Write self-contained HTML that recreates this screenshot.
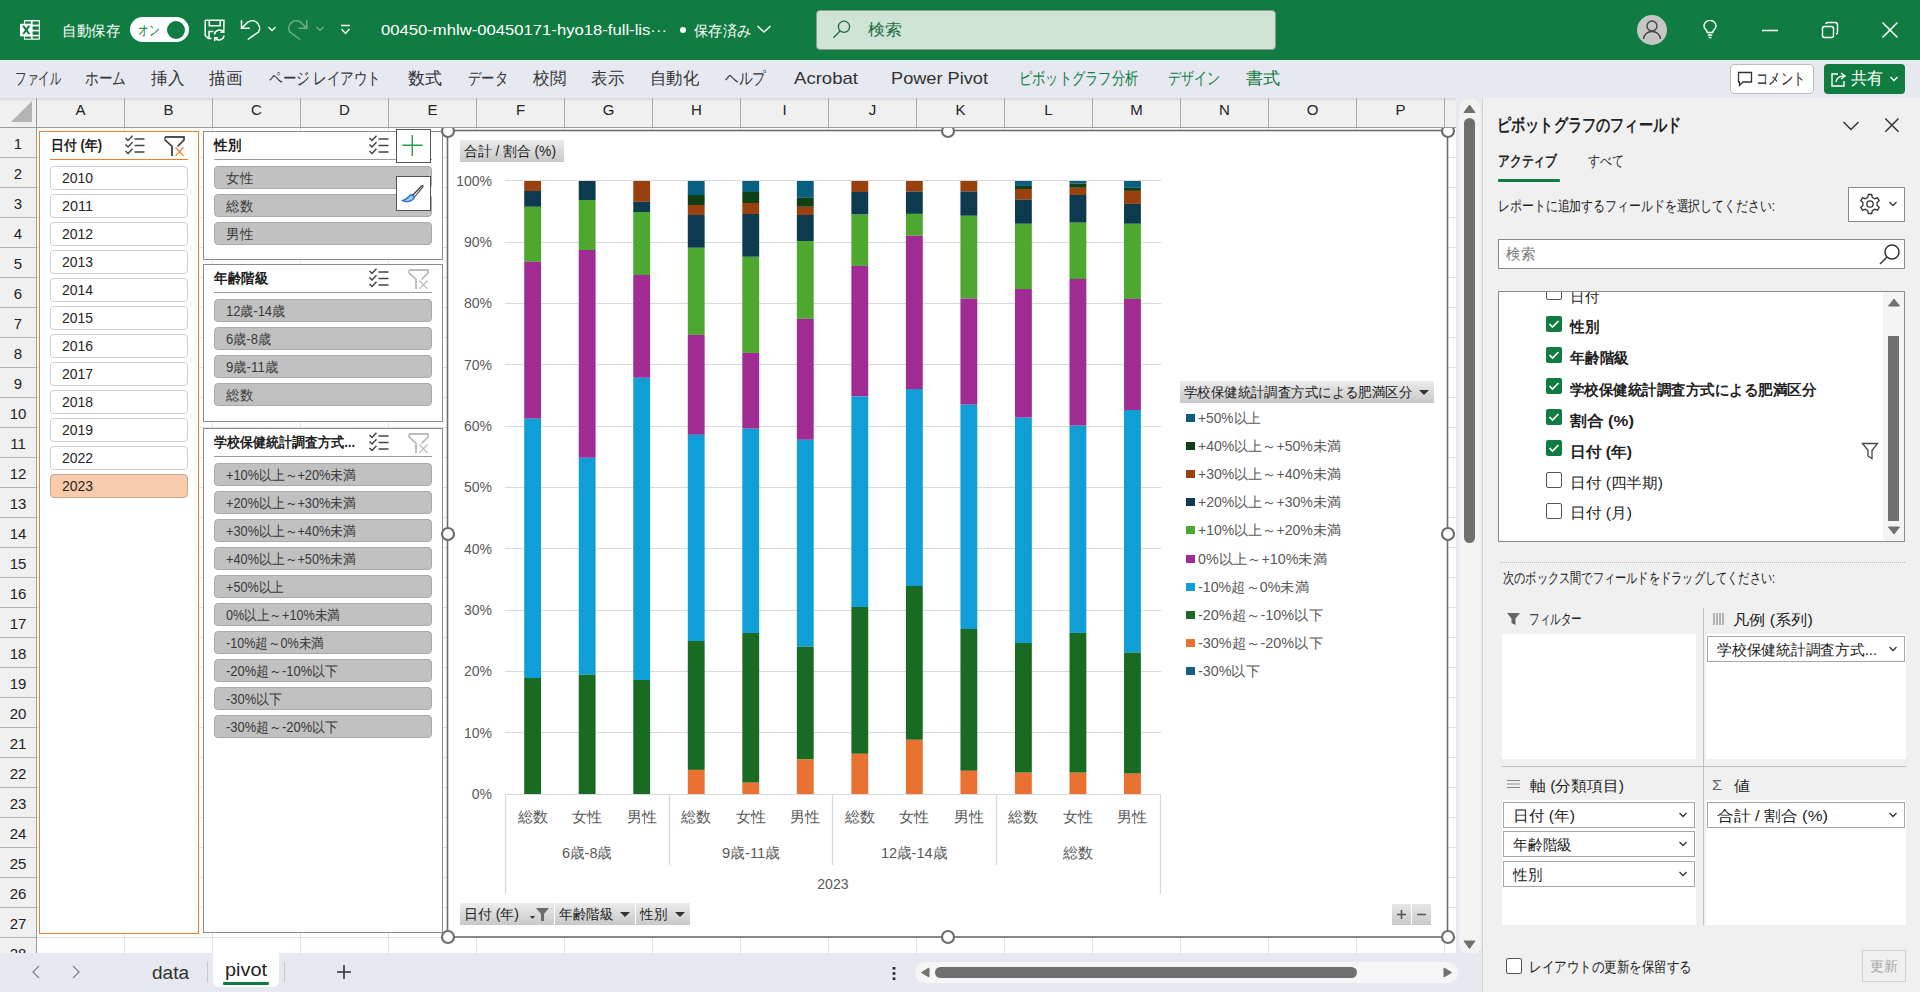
<!DOCTYPE html><html><head><meta charset="utf-8"><title>Excel</title><style>
*{margin:0;padding:0;box-sizing:border-box}
html,body{width:1920px;height:992px;overflow:hidden;background:#fff;font-family:"Liberation Sans",sans-serif;color:#222}
.a{position:absolute}
.t,.fit{position:absolute;white-space:nowrap}
.fit span{display:inline-block;transform-origin:0 50%}
#title{left:0;top:0;width:1920px;height:60px;background:#107c41}
#ribbon{left:0;top:60px;width:1920px;height:38px;background:#e6e9ef}
.tab{position:absolute;top:68px;font-size:17px;color:#333;white-space:nowrap;line-height:22px}
.tab.g{color:#107c41}
#colhdr{left:0;top:98px;width:1456px;height:30px;background:linear-gradient(#d9d9d9,#ededed 3px,#f0f0f0 6px);border-bottom:1px solid #9b9b9b}
.ch{position:absolute;top:98px;height:29px;width:88px;text-align:center;font-size:15px;line-height:22px;padding-top:0;color:#222;border-right:1px solid #ababab}
.rh{position:absolute;left:0;width:36px;height:30px;text-align:center;font-size:15px;line-height:32px;color:#222;border-bottom:1px solid #b4b4b4}
#rowhdr{left:0;top:128px;width:37px;height:825px;background:#f0f0f0;border-right:1px solid #9b9b9b}
#grid{left:37px;top:128px;width:1419px;height:825px;background-color:#fff;
 background-image:linear-gradient(to right,#e1e1e1 1px,transparent 1px),linear-gradient(to bottom,#e1e1e1 1px,transparent 1px);
 background-size:88px 30px;background-position:87px 29px}
#bottom{left:0;top:953px;width:1482px;height:39px;background:#e6e9ef}
#panel{left:1482px;top:98px;width:438px;height:894px;background:#f0f0f0;border-left:1px solid #d2d2d2}
.box{position:absolute}
</style></head><body>
<div id="title" class="a"></div><div id="ribbon" class="a"></div>
<svg class="a" style="left:19px;top:19px" width="23" height="23" viewBox="0 0 23 23">
<rect x="4.9" y="1" width="16" height="19.8" fill="#fff" rx="0.6"/><rect x="1" y="4.7" width="5" height="12.6" fill="#fff" rx="0.6"/>
<g fill="#107c41"><rect x="13.6" y="2.4" width="6.2" height="3.2"/><rect x="13.6" y="7.4" width="6.2" height="3.4"/><rect x="13.6" y="12.4" width="6.2" height="3.4"/><rect x="13.6" y="17.4" width="6.2" height="2.1"/><rect x="6" y="2.4" width="5.9" height="2.3"/><rect x="6" y="17.6" width="5.9" height="2.1"/></g>
<path d="M4.6 7.3 L9.9 14.5 M9.9 7.3 L4.6 14.5" stroke="#107c41" stroke-width="2" stroke-linecap="round"/>
</svg><div class="fit" style="left:62px;top:19.5px;width:58px;font-size:15px;line-height:21px;color:#fff;"><span>自動保存</span></div><div class="a" style="left:130px;top:17px;width:59px;height:25px;border-radius:13px;background:#fff"></div><div class="fit" style="left:138px;top:20.0px;width:21.5px;font-size:14px;line-height:20px;color:#107c41;"><span>オン</span></div><div class="a" style="left:167px;top:21px;width:18px;height:18px;border-radius:9px;background:#107c41"></div><svg class="a" style="left:204px;top:19px" width="24" height="23" fill="none" stroke="#fff" stroke-width="1.5">
<path d="M1.2 1.3 H19.9 V9.5"/><path d="M1.2 1.3 V16.5 L4.5 19.5 H7.5"/><path d="M5.3 1.5 V6.8 H16.2 V1.5"/><path d="M5 19.5 V12.5 H9.5"/>
<path d="M10.5 15.5 A5 5 0 0 1 19.5 13 M20 16.5 A5 5 0 0 1 11 19"/><path d="M19.8 9.8 V13.3 H16.3 M10.7 22 V18.7 H14"/>
</svg><svg class="a" style="left:236px;top:16px" width="28" height="28" fill="none" stroke="#fff" stroke-width="1.5">
<path d="M5.5 4.3 V12.3 H13.8"/><path d="M5.8 12 L11.8 6.2 A7.4 7.4 0 0 1 22.5 16 L11.7 23.5"/></svg><svg class="a" style="left:267px;top:25px" width="10" height="8"><path d="M1.5 2 L5 5.5 L8.5 2" fill="none" stroke="#fff" stroke-width="1.3"/></svg><svg class="a" style="left:284px;top:16px" width="28" height="28" fill="none" stroke="#6fb08a" stroke-width="1.5">
<path d="M22.8 4.3 V12.3 H14.5"/><path d="M22.5 12 L16.5 6.2 A7.4 7.4 0 0 0 5.8 16 L16.2 23.5"/></svg><svg class="a" style="left:315px;top:25px" width="10" height="8"><path d="M1.5 2 L5 5.5 L8.5 2" fill="none" stroke="#6fb08a" stroke-width="1.3"/></svg><svg class="a" style="left:339px;top:24px" width="13" height="12"><path d="M2 1.5 H11 M2.5 5 L6.5 9.5 L10.5 5" fill="none" stroke="#fff" stroke-width="1.4"/></svg><div class="fit" style="left:381px;top:19.0px;width:286px;font-size:15.5px;line-height:22px;color:#fff;"><span>00450-mhlw-00450171-hyo18-full-lis···</span></div><div class="a" style="left:680px;top:27px;width:6px;height:6px;border-radius:3px;background:#fff"></div><div class="fit" style="left:694px;top:19.5px;width:57px;font-size:15px;line-height:21px;color:#fff;"><span>保存済み</span></div><svg class="a" style="left:756px;top:24px" width="16" height="10"><path d="M1.5 2 L8 8 L14.5 2" fill="none" stroke="#fff" stroke-width="1.4"/></svg><div class="a" style="left:816px;top:10px;width:460px;height:40px;border-radius:4px;background:#cfe3d6;border:1px solid #8f9892"></div><svg class="a" style="left:832px;top:18px" width="22" height="22" fill="none" stroke="#1b6c3e" stroke-width="1.3"><circle cx="12" cy="8.8" r="5.6"/><path d="M8 13 L1.5 19.8"/></svg><div class="fit" style="left:868px;top:19.0px;width:34px;font-size:16px;line-height:22px;color:#1a6e3e;"><span>検索</span></div><div class="a" style="left:1637px;top:15px;width:30px;height:30px;border-radius:15px;background:#c6c6c6"></div><svg class="a" style="left:1637px;top:15px" width="30" height="30" fill="none" stroke="#444" stroke-width="1.4"><circle cx="15" cy="11" r="5"/><path d="M6.5 24 a8.5 7.5 0 0 1 17 0"/></svg><svg class="a" style="left:1702px;top:20px" width="16" height="20" fill="none" stroke="#fff" stroke-width="1.4"><path d="M5.3 12.5 C5.3 10 2 9 2 6.3 A6 6 0 0 1 14 6.3 C14 9 10.7 10 10.7 12.5 Z"/><path d="M5.8 15 H10.2 M6.5 17.5 H9.5"/></svg><svg class="a" style="left:1760px;top:20px" width="20" height="20"><path d="M2 10.5 H18" stroke="#fff" stroke-width="1.5"/></svg><svg class="a" style="left:1820px;top:20px" width="20" height="20" fill="none" stroke="#fff" stroke-width="1.4"><rect x="2.5" y="6.5" width="11" height="11" rx="2"/><path d="M6 4 Q6 2.5 8 2.5 H15 Q17.5 2.5 17.5 5 V12 Q17.5 14 16 14"/></svg><svg class="a" style="left:1880px;top:20px" width="20" height="20"><path d="M2.5 2.5 L17.5 17.5 M17.5 2.5 L2.5 17.5" stroke="#fff" stroke-width="1.6"/></svg>
<div class="fit" style="left:15px;top:67.0px;width:46px;font-size:17px;line-height:24px;color:#333;"><span>ファイル</span></div><div class="fit" style="left:85px;top:67.0px;width:41px;font-size:17px;line-height:24px;color:#333;"><span>ホーム</span></div><div class="fit" style="left:151px;top:67.0px;width:33px;font-size:17px;line-height:24px;color:#333;"><span>挿入</span></div><div class="fit" style="left:209px;top:67.0px;width:33px;font-size:17px;line-height:24px;color:#333;"><span>描画</span></div><div class="fit" style="left:269px;top:67.0px;width:112px;font-size:17px;line-height:24px;color:#333;"><span>ページ レイアウト</span></div><div class="fit" style="left:408px;top:67.0px;width:34px;font-size:17px;line-height:24px;color:#333;"><span>数式</span></div><div class="fit" style="left:468px;top:67.0px;width:40px;font-size:17px;line-height:24px;color:#333;"><span>データ</span></div><div class="fit" style="left:533px;top:67.0px;width:33px;font-size:17px;line-height:24px;color:#333;"><span>校閲</span></div><div class="fit" style="left:591px;top:67.0px;width:33px;font-size:17px;line-height:24px;color:#333;"><span>表示</span></div><div class="fit" style="left:650px;top:67.0px;width:49px;font-size:17px;line-height:24px;color:#333;"><span>自動化</span></div><div class="fit" style="left:725px;top:67.0px;width:41px;font-size:17px;line-height:24px;color:#333;"><span>ヘルプ</span></div><div class="fit" style="left:794px;top:67.0px;width:64px;font-size:17px;line-height:24px;color:#333;"><span>Acrobat</span></div><div class="fit" style="left:891px;top:67.0px;width:97px;font-size:17px;line-height:24px;color:#333;"><span>Power Pivot</span></div><div class="fit" style="left:1019px;top:67.0px;width:119px;font-size:17px;line-height:24px;color:#107c41;"><span>ピボットグラフ分析</span></div><div class="fit" style="left:1168px;top:67.0px;width:52px;font-size:17px;line-height:24px;color:#107c41;"><span>デザイン</span></div><div class="fit" style="left:1246px;top:67.0px;width:34px;font-size:17px;line-height:24px;color:#107c41;"><span>書式</span></div><div class="a" style="left:1730px;top:64px;width:84px;height:30px;border:1px solid #bcbcbc;border-radius:4px;background:#fff"></div><svg class="a" style="left:1736px;top:70px" width="18" height="18" fill="none" stroke="#333" stroke-width="1.3"><path d="M2.5 2.5 H15.5 V12 H7 L3.5 15.5 V12 H2.5 Z"/></svg><div class="fit" style="left:1756px;top:68.0px;width:49px;font-size:16px;line-height:22px;color:#222;"><span>コメント</span></div><div class="a" style="left:1824px;top:64px;width:81px;height:30px;border-radius:4px;background:#107c41"></div><svg class="a" style="left:1829px;top:69px" width="20" height="20" fill="none" stroke="#fff" stroke-width="1.4"><path d="M9 5 H3 V17 H15 V12"/><path d="M7 13 Q8 7 15 7 M12 4 L16 7 L12 10"/></svg><div class="fit" style="left:1851px;top:67.0px;width:32px;font-size:17px;line-height:24px;color:#fff;"><span>共有</span></div><svg class="a" style="left:1889px;top:75px" width="10" height="8"><path d="M1.5 2 L5 5.5 L8.5 2" fill="none" stroke="#fff" stroke-width="1.4"/></svg>
<div id="grid" class="a"></div>
<div id="rowhdr" class="a"></div>
<div class="rh" style="top:128px">1</div>
<div class="rh" style="top:158px">2</div>
<div class="rh" style="top:188px">3</div>
<div class="rh" style="top:218px">4</div>
<div class="rh" style="top:248px">5</div>
<div class="rh" style="top:278px">6</div>
<div class="rh" style="top:308px">7</div>
<div class="rh" style="top:338px">8</div>
<div class="rh" style="top:368px">9</div>
<div class="rh" style="top:398px">10</div>
<div class="rh" style="top:428px">11</div>
<div class="rh" style="top:458px">12</div>
<div class="rh" style="top:488px">13</div>
<div class="rh" style="top:518px">14</div>
<div class="rh" style="top:548px">15</div>
<div class="rh" style="top:578px">16</div>
<div class="rh" style="top:608px">17</div>
<div class="rh" style="top:638px">18</div>
<div class="rh" style="top:668px">19</div>
<div class="rh" style="top:698px">20</div>
<div class="rh" style="top:728px">21</div>
<div class="rh" style="top:758px">22</div>
<div class="rh" style="top:788px">23</div>
<div class="rh" style="top:818px">24</div>
<div class="rh" style="top:848px">25</div>
<div class="rh" style="top:878px">26</div>
<div class="rh" style="top:908px">27</div>
<div class="rh" style="top:938px">28</div>
<div class="a" style="left:39px;top:131px;width:160px;height:803px;border:1.5px solid #ed7d31;background:#fff"></div><div class="fit" style="left:51px;top:135.0px;width:51px;font-size:14px;line-height:20px;color:#222;font-weight:bold;"><span>日付 (年)</span></div><svg class="a" style="left:124px;top:135px" width="22" height="20" fill="none" stroke="#444" stroke-width="1.5"><path d="M1.5 3 L4 5.5 L8.5 0.8 M1.5 9.5 L4 12 L8.5 7.3 M1.5 16 L4 18.5 L8.5 13.8"/><path d="M10.5 4 H20.5 M10.5 10.5 H20.5 M10.5 17 H20.5" stroke-width="1.4"/></svg><svg class="a" style="left:164px;top:136px" width="22" height="21" fill="none" stroke-width="1.4"><path d="M1 1 H20 V4 L14 10 M8 10 L1 4 Z M8 10 V20" stroke="#444"/><path d="M1 1 H20 V4 L13.5 10.5 M1 1 V4 L8 10.5 V20" stroke="#444"/><path d="M11.5 11.5 L19.5 19.8 M19.5 11.5 L11.5 19.8" stroke="#ed7d31" stroke-width="1.2"/></svg><div class="a" style="left:50px;top:158.5px;width:138px;height:1.5px;background:#ed7d31"></div><div class="a" style="left:50px;top:166px;width:138px;height:24px;border:1px solid #cfcfcf;border-radius:4px;background:#fff"></div><div class="fit" style="left:62px;top:168.0px;width:31px;font-size:14px;line-height:20px;color:#262626;"><span>2010</span></div><div class="a" style="left:50px;top:194px;width:138px;height:24px;border:1px solid #cfcfcf;border-radius:4px;background:#fff"></div><div class="fit" style="left:62px;top:196.0px;width:31px;font-size:14px;line-height:20px;color:#262626;"><span>2011</span></div><div class="a" style="left:50px;top:222px;width:138px;height:24px;border:1px solid #cfcfcf;border-radius:4px;background:#fff"></div><div class="fit" style="left:62px;top:224.0px;width:31px;font-size:14px;line-height:20px;color:#262626;"><span>2012</span></div><div class="a" style="left:50px;top:250px;width:138px;height:24px;border:1px solid #cfcfcf;border-radius:4px;background:#fff"></div><div class="fit" style="left:62px;top:252.0px;width:31px;font-size:14px;line-height:20px;color:#262626;"><span>2013</span></div><div class="a" style="left:50px;top:278px;width:138px;height:24px;border:1px solid #cfcfcf;border-radius:4px;background:#fff"></div><div class="fit" style="left:62px;top:280.0px;width:31px;font-size:14px;line-height:20px;color:#262626;"><span>2014</span></div><div class="a" style="left:50px;top:306px;width:138px;height:24px;border:1px solid #cfcfcf;border-radius:4px;background:#fff"></div><div class="fit" style="left:62px;top:308.0px;width:31px;font-size:14px;line-height:20px;color:#262626;"><span>2015</span></div><div class="a" style="left:50px;top:334px;width:138px;height:24px;border:1px solid #cfcfcf;border-radius:4px;background:#fff"></div><div class="fit" style="left:62px;top:336.0px;width:31px;font-size:14px;line-height:20px;color:#262626;"><span>2016</span></div><div class="a" style="left:50px;top:362px;width:138px;height:24px;border:1px solid #cfcfcf;border-radius:4px;background:#fff"></div><div class="fit" style="left:62px;top:364.0px;width:31px;font-size:14px;line-height:20px;color:#262626;"><span>2017</span></div><div class="a" style="left:50px;top:390px;width:138px;height:24px;border:1px solid #cfcfcf;border-radius:4px;background:#fff"></div><div class="fit" style="left:62px;top:392.0px;width:31px;font-size:14px;line-height:20px;color:#262626;"><span>2018</span></div><div class="a" style="left:50px;top:418px;width:138px;height:24px;border:1px solid #cfcfcf;border-radius:4px;background:#fff"></div><div class="fit" style="left:62px;top:420.0px;width:31px;font-size:14px;line-height:20px;color:#262626;"><span>2019</span></div><div class="a" style="left:50px;top:446px;width:138px;height:24px;border:1px solid #cfcfcf;border-radius:4px;background:#fff"></div><div class="fit" style="left:62px;top:448.0px;width:31px;font-size:14px;line-height:20px;color:#262626;"><span>2022</span></div><div class="a" style="left:50px;top:474px;width:138px;height:24px;border:1px solid #c9a58e;border-radius:4px;background:#f8cbad"></div><div class="fit" style="left:62px;top:476.0px;width:31px;font-size:14px;line-height:20px;color:#262626;"><span>2023</span></div><div class="a" style="left:203px;top:131px;width:240px;height:129px;border:1.5px solid #8c8c8c;background:#fff"></div><div class="fit" style="left:214px;top:135.0px;width:27px;font-size:14px;line-height:20px;color:#222;font-weight:bold;"><span>性別</span></div><svg class="a" style="left:368px;top:135px" width="22" height="20" fill="none" stroke="#444" stroke-width="1.5"><path d="M1.5 3 L4 5.5 L8.5 0.8 M1.5 9.5 L4 12 L8.5 7.3 M1.5 16 L4 18.5 L8.5 13.8"/><path d="M10.5 4 H20.5 M10.5 10.5 H20.5 M10.5 17 H20.5" stroke-width="1.4"/></svg><div class="a" style="left:214px;top:158.5px;width:218px;height:1px;background:#999"></div><div class="a" style="left:214px;top:165.5px;width:218px;height:23.5px;border:1px solid #a9a9a9;border-radius:4px;background:#c1c1c1"></div><div class="fit" style="left:226px;top:167.5px;width:27px;font-size:14px;line-height:20px;color:#3a3a3a;"><span>女性</span></div><div class="a" style="left:214px;top:193.5px;width:218px;height:23.5px;border:1px solid #a9a9a9;border-radius:4px;background:#c1c1c1"></div><div class="fit" style="left:226px;top:195.5px;width:27px;font-size:14px;line-height:20px;color:#3a3a3a;"><span>総数</span></div><div class="a" style="left:214px;top:221.5px;width:218px;height:23.5px;border:1px solid #a9a9a9;border-radius:4px;background:#c1c1c1"></div><div class="fit" style="left:226px;top:223.5px;width:27px;font-size:14px;line-height:20px;color:#3a3a3a;"><span>男性</span></div><div class="a" style="left:203px;top:264px;width:240px;height:158px;border:1.5px solid #8c8c8c;background:#fff"></div><div class="fit" style="left:214px;top:268.0px;width:54px;font-size:14px;line-height:20px;color:#222;font-weight:bold;"><span>年齢階級</span></div><svg class="a" style="left:368px;top:268px" width="22" height="20" fill="none" stroke="#444" stroke-width="1.5"><path d="M1.5 3 L4 5.5 L8.5 0.8 M1.5 9.5 L4 12 L8.5 7.3 M1.5 16 L4 18.5 L8.5 13.8"/><path d="M10.5 4 H20.5 M10.5 10.5 H20.5 M10.5 17 H20.5" stroke-width="1.4"/></svg><svg class="a" style="left:408px;top:269px" width="22" height="21" fill="none" stroke-width="1.4"><path d="M1 1 H20 V4 L14 10 M8 10 L1 4 Z M8 10 V20" stroke="#b8b8b8"/><path d="M1 1 H20 V4 L13.5 10.5 M1 1 V4 L8 10.5 V20" stroke="#b8b8b8"/><path d="M11.5 11.5 L19.5 19.8 M19.5 11.5 L11.5 19.8" stroke="#b8b8b8" stroke-width="1.2"/></svg><div class="a" style="left:214px;top:291.5px;width:218px;height:1px;background:#999"></div><div class="a" style="left:214px;top:298.5px;width:218px;height:23.5px;border:1px solid #a9a9a9;border-radius:4px;background:#c1c1c1"></div><div class="fit" style="left:226px;top:300.5px;width:59px;font-size:14px;line-height:20px;color:#3a3a3a;"><span>12歳-14歳</span></div><div class="a" style="left:214px;top:326.5px;width:218px;height:23.5px;border:1px solid #a9a9a9;border-radius:4px;background:#c1c1c1"></div><div class="fit" style="left:226px;top:328.5px;width:45px;font-size:14px;line-height:20px;color:#3a3a3a;"><span>6歳-8歳</span></div><div class="a" style="left:214px;top:354.5px;width:218px;height:23.5px;border:1px solid #a9a9a9;border-radius:4px;background:#c1c1c1"></div><div class="fit" style="left:226px;top:356.5px;width:52px;font-size:14px;line-height:20px;color:#3a3a3a;"><span>9歳-11歳</span></div><div class="a" style="left:214px;top:382.5px;width:218px;height:23.5px;border:1px solid #a9a9a9;border-radius:4px;background:#c1c1c1"></div><div class="fit" style="left:226px;top:384.5px;width:27px;font-size:14px;line-height:20px;color:#3a3a3a;"><span>総数</span></div><div class="a" style="left:203px;top:428px;width:240px;height:505px;border:1.5px solid #8c8c8c;background:#fff"></div><div class="fit" style="left:214px;top:432.0px;width:141px;font-size:14px;line-height:20px;color:#222;font-weight:bold;"><span>学校保健統計調査方式...</span></div><svg class="a" style="left:368px;top:432px" width="22" height="20" fill="none" stroke="#444" stroke-width="1.5"><path d="M1.5 3 L4 5.5 L8.5 0.8 M1.5 9.5 L4 12 L8.5 7.3 M1.5 16 L4 18.5 L8.5 13.8"/><path d="M10.5 4 H20.5 M10.5 10.5 H20.5 M10.5 17 H20.5" stroke-width="1.4"/></svg><svg class="a" style="left:408px;top:433px" width="22" height="21" fill="none" stroke-width="1.4"><path d="M1 1 H20 V4 L14 10 M8 10 L1 4 Z M8 10 V20" stroke="#b8b8b8"/><path d="M1 1 H20 V4 L13.5 10.5 M1 1 V4 L8 10.5 V20" stroke="#b8b8b8"/><path d="M11.5 11.5 L19.5 19.8 M19.5 11.5 L11.5 19.8" stroke="#b8b8b8" stroke-width="1.2"/></svg><div class="a" style="left:214px;top:455.5px;width:218px;height:1px;background:#999"></div><div class="a" style="left:214px;top:462.5px;width:218px;height:23.5px;border:1px solid #a9a9a9;border-radius:4px;background:#c1c1c1"></div><div class="fit" style="left:226px;top:464.5px;width:130px;font-size:14px;line-height:20px;color:#3a3a3a;"><span>+10%以上～+20%未満</span></div><div class="a" style="left:214px;top:490.5px;width:218px;height:23.5px;border:1px solid #a9a9a9;border-radius:4px;background:#c1c1c1"></div><div class="fit" style="left:226px;top:492.5px;width:130px;font-size:14px;line-height:20px;color:#3a3a3a;"><span>+20%以上～+30%未満</span></div><div class="a" style="left:214px;top:518.5px;width:218px;height:23.5px;border:1px solid #a9a9a9;border-radius:4px;background:#c1c1c1"></div><div class="fit" style="left:226px;top:520.5px;width:130px;font-size:14px;line-height:20px;color:#3a3a3a;"><span>+30%以上～+40%未満</span></div><div class="a" style="left:214px;top:546.5px;width:218px;height:23.5px;border:1px solid #a9a9a9;border-radius:4px;background:#c1c1c1"></div><div class="fit" style="left:226px;top:548.5px;width:130px;font-size:14px;line-height:20px;color:#3a3a3a;"><span>+40%以上～+50%未満</span></div><div class="a" style="left:214px;top:574.5px;width:218px;height:23.5px;border:1px solid #a9a9a9;border-radius:4px;background:#c1c1c1"></div><div class="fit" style="left:226px;top:576.5px;width:58px;font-size:14px;line-height:20px;color:#3a3a3a;"><span>+50%以上</span></div><div class="a" style="left:214px;top:602.5px;width:218px;height:23.5px;border:1px solid #a9a9a9;border-radius:4px;background:#c1c1c1"></div><div class="fit" style="left:226px;top:604.5px;width:114px;font-size:14px;line-height:20px;color:#3a3a3a;"><span>0%以上～+10%未満</span></div><div class="a" style="left:214px;top:630.5px;width:218px;height:23.5px;border:1px solid #a9a9a9;border-radius:4px;background:#c1c1c1"></div><div class="fit" style="left:226px;top:632.5px;width:98px;font-size:14px;line-height:20px;color:#3a3a3a;"><span>-10%超～0%未満</span></div><div class="a" style="left:214px;top:658.5px;width:218px;height:23.5px;border:1px solid #a9a9a9;border-radius:4px;background:#c1c1c1"></div><div class="fit" style="left:226px;top:660.5px;width:112px;font-size:14px;line-height:20px;color:#3a3a3a;"><span>-20%超～-10%以下</span></div><div class="a" style="left:214px;top:686.5px;width:218px;height:23.5px;border:1px solid #a9a9a9;border-radius:4px;background:#c1c1c1"></div><div class="fit" style="left:226px;top:688.5px;width:56px;font-size:14px;line-height:20px;color:#3a3a3a;"><span>-30%以下</span></div><div class="a" style="left:214px;top:714.5px;width:218px;height:23.5px;border:1px solid #a9a9a9;border-radius:4px;background:#c1c1c1"></div><div class="fit" style="left:226px;top:716.5px;width:112px;font-size:14px;line-height:20px;color:#3a3a3a;"><span>-30%超～-20%以下</span></div><div class="a" style="left:396px;top:129px;width:35px;height:34px;border:1.5px solid #555;background:#fff"></div><svg class="a" style="left:396px;top:129px" width="35" height="34"><path d="M16.3 6 V27 M6.3 16.2 H26.7" stroke="#22a046" stroke-width="1.4"/></svg><div class="a" style="left:396px;top:176px;width:35px;height:35px;border:1.5px solid #555;background:#fff"></div><svg class="a" style="left:396px;top:176px" width="35" height="35"><path d="M16.5 19.5 L25.5 10 Q27.5 8.5 26.8 11 L18.5 21" fill="#fff" stroke="#333" stroke-width="1.1"/><path d="M16 18.5 C12.5 19 12.5 23 6.5 24.5 C9.5 26.5 16 26 18.5 21.5 Z" fill="#9cc8ee" stroke="#1f6fc5" stroke-width="1.3"/></svg>
<div class="a" style="left:448px;top:131px;width:1000px;height:806px;background:#fff"></div><svg class="a" style="left:0;top:0" width="1920" height="992"><line x1="505" y1="794.5" x2="1161" y2="794.5" stroke="#d9d9d9" stroke-width="1"/><line x1="505" y1="732.5" x2="1161" y2="732.5" stroke="#d9d9d9" stroke-width="1"/><line x1="505" y1="671.5" x2="1161" y2="671.5" stroke="#d9d9d9" stroke-width="1"/><line x1="505" y1="610.5" x2="1161" y2="610.5" stroke="#d9d9d9" stroke-width="1"/><line x1="505" y1="548.5" x2="1161" y2="548.5" stroke="#d9d9d9" stroke-width="1"/><line x1="505" y1="487.5" x2="1161" y2="487.5" stroke="#d9d9d9" stroke-width="1"/><line x1="505" y1="426.5" x2="1161" y2="426.5" stroke="#d9d9d9" stroke-width="1"/><line x1="505" y1="364.5" x2="1161" y2="364.5" stroke="#d9d9d9" stroke-width="1"/><line x1="505" y1="303.5" x2="1161" y2="303.5" stroke="#d9d9d9" stroke-width="1"/><line x1="505" y1="242.5" x2="1161" y2="242.5" stroke="#d9d9d9" stroke-width="1"/><line x1="505" y1="180.5" x2="1161" y2="180.5" stroke="#d9d9d9" stroke-width="1"/><rect x="524.20" y="181.0" width="16.85" height="10.00" fill="#99400f"/><rect x="524.20" y="191" width="16.85" height="15.80" fill="#0d3a4e"/><rect x="524.20" y="206.8" width="16.85" height="55.00" fill="#4ea72e"/><rect x="524.20" y="261.8" width="16.85" height="156.90" fill="#a02b93"/><rect x="524.20" y="418.7" width="16.85" height="259.30" fill="#0f9ed5"/><rect x="524.20" y="678" width="16.85" height="116.00" fill="#196b24"/><rect x="578.73" y="181.0" width="16.85" height="19.00" fill="#0d3a4e"/><rect x="578.73" y="200" width="16.85" height="50.00" fill="#4ea72e"/><rect x="578.73" y="250" width="16.85" height="207.80" fill="#a02b93"/><rect x="578.73" y="457.8" width="16.85" height="216.90" fill="#0f9ed5"/><rect x="578.73" y="674.7" width="16.85" height="119.30" fill="#196b24"/><rect x="633.26" y="181.0" width="16.85" height="20.80" fill="#99400f"/><rect x="633.26" y="201.8" width="16.85" height="10.20" fill="#0d3a4e"/><rect x="633.26" y="212" width="16.85" height="63.00" fill="#4ea72e"/><rect x="633.26" y="275" width="16.85" height="102.80" fill="#a02b93"/><rect x="633.26" y="377.8" width="16.85" height="302.20" fill="#0f9ed5"/><rect x="633.26" y="680" width="16.85" height="114.00" fill="#196b24"/><rect x="687.79" y="181.0" width="16.85" height="14.00" fill="#095f80"/><rect x="687.79" y="195" width="16.85" height="10.00" fill="#0f4015"/><rect x="687.79" y="205" width="16.85" height="10.00" fill="#99400f"/><rect x="687.79" y="215" width="16.85" height="32.80" fill="#0d3a4e"/><rect x="687.79" y="247.8" width="16.85" height="87.10" fill="#4ea72e"/><rect x="687.79" y="334.9" width="16.85" height="99.90" fill="#a02b93"/><rect x="687.79" y="434.8" width="16.85" height="206.20" fill="#0f9ed5"/><rect x="687.79" y="641" width="16.85" height="128.90" fill="#196b24"/><rect x="687.79" y="769.9" width="16.85" height="24.10" fill="#e97132"/><rect x="742.32" y="181.0" width="16.85" height="11.00" fill="#095f80"/><rect x="742.32" y="192" width="16.85" height="11.00" fill="#0f4015"/><rect x="742.32" y="203" width="16.85" height="11.00" fill="#99400f"/><rect x="742.32" y="214" width="16.85" height="42.80" fill="#0d3a4e"/><rect x="742.32" y="256.8" width="16.85" height="96.10" fill="#4ea72e"/><rect x="742.32" y="352.9" width="16.85" height="75.80" fill="#a02b93"/><rect x="742.32" y="428.7" width="16.85" height="204.30" fill="#0f9ed5"/><rect x="742.32" y="633" width="16.85" height="149.70" fill="#196b24"/><rect x="742.32" y="782.7" width="16.85" height="11.30" fill="#e97132"/><rect x="796.85" y="181.0" width="16.85" height="16.80" fill="#095f80"/><rect x="796.85" y="197.8" width="16.85" height="9.00" fill="#0f4015"/><rect x="796.85" y="206.8" width="16.85" height="8.20" fill="#99400f"/><rect x="796.85" y="215" width="16.85" height="26.00" fill="#0d3a4e"/><rect x="796.85" y="241" width="16.85" height="77.80" fill="#4ea72e"/><rect x="796.85" y="318.8" width="16.85" height="121.00" fill="#a02b93"/><rect x="796.85" y="439.8" width="16.85" height="206.90" fill="#0f9ed5"/><rect x="796.85" y="646.7" width="16.85" height="112.80" fill="#196b24"/><rect x="796.85" y="759.5" width="16.85" height="34.50" fill="#e97132"/><rect x="851.38" y="181.0" width="16.85" height="11.00" fill="#99400f"/><rect x="851.38" y="192" width="16.85" height="22.60" fill="#0d3a4e"/><rect x="851.38" y="214.6" width="16.85" height="51.30" fill="#4ea72e"/><rect x="851.38" y="265.9" width="16.85" height="130.60" fill="#a02b93"/><rect x="851.38" y="396.5" width="16.85" height="210.50" fill="#0f9ed5"/><rect x="851.38" y="607" width="16.85" height="146.80" fill="#196b24"/><rect x="851.38" y="753.8" width="16.85" height="40.20" fill="#e97132"/><rect x="905.91" y="181.0" width="16.85" height="10.60" fill="#99400f"/><rect x="905.91" y="191.6" width="16.85" height="22.30" fill="#0d3a4e"/><rect x="905.91" y="213.9" width="16.85" height="21.80" fill="#4ea72e"/><rect x="905.91" y="235.7" width="16.85" height="153.30" fill="#a02b93"/><rect x="905.91" y="389" width="16.85" height="197.00" fill="#0f9ed5"/><rect x="905.91" y="586" width="16.85" height="153.80" fill="#196b24"/><rect x="905.91" y="739.8" width="16.85" height="54.20" fill="#e97132"/><rect x="960.44" y="181.0" width="16.85" height="10.60" fill="#99400f"/><rect x="960.44" y="191.6" width="16.85" height="24.20" fill="#0d3a4e"/><rect x="960.44" y="215.8" width="16.85" height="82.70" fill="#4ea72e"/><rect x="960.44" y="298.5" width="16.85" height="106.20" fill="#a02b93"/><rect x="960.44" y="404.7" width="16.85" height="224.30" fill="#0f9ed5"/><rect x="960.44" y="629" width="16.85" height="141.80" fill="#196b24"/><rect x="960.44" y="770.8" width="16.85" height="23.20" fill="#e97132"/><rect x="1014.97" y="181.0" width="16.85" height="4.90" fill="#095f80"/><rect x="1014.97" y="185.9" width="16.85" height="3.10" fill="#0f4015"/><rect x="1014.97" y="189" width="16.85" height="10.70" fill="#99400f"/><rect x="1014.97" y="199.7" width="16.85" height="24.10" fill="#0d3a4e"/><rect x="1014.97" y="223.8" width="16.85" height="65.20" fill="#4ea72e"/><rect x="1014.97" y="289" width="16.85" height="128.70" fill="#a02b93"/><rect x="1014.97" y="417.7" width="16.85" height="225.30" fill="#0f9ed5"/><rect x="1014.97" y="643" width="16.85" height="129.70" fill="#196b24"/><rect x="1014.97" y="772.7" width="16.85" height="21.30" fill="#e97132"/><rect x="1069.50" y="181.0" width="16.85" height="2.60" fill="#095f80"/><rect x="1069.50" y="183.6" width="16.85" height="4.20" fill="#0f4015"/><rect x="1069.50" y="187.8" width="16.85" height="7.20" fill="#99400f"/><rect x="1069.50" y="195" width="16.85" height="27.70" fill="#0d3a4e"/><rect x="1069.50" y="222.7" width="16.85" height="56.30" fill="#4ea72e"/><rect x="1069.50" y="279" width="16.85" height="146.70" fill="#a02b93"/><rect x="1069.50" y="425.7" width="16.85" height="207.20" fill="#0f9ed5"/><rect x="1069.50" y="632.9" width="16.85" height="139.80" fill="#196b24"/><rect x="1069.50" y="772.7" width="16.85" height="21.30" fill="#e97132"/><rect x="1124.03" y="181.0" width="16.85" height="6.80" fill="#095f80"/><rect x="1124.03" y="187.8" width="16.85" height="3.10" fill="#0f4015"/><rect x="1124.03" y="190.9" width="16.85" height="13.00" fill="#99400f"/><rect x="1124.03" y="203.9" width="16.85" height="19.90" fill="#0d3a4e"/><rect x="1124.03" y="223.8" width="16.85" height="75.10" fill="#4ea72e"/><rect x="1124.03" y="298.9" width="16.85" height="111.10" fill="#a02b93"/><rect x="1124.03" y="410" width="16.85" height="242.70" fill="#0f9ed5"/><rect x="1124.03" y="652.7" width="16.85" height="121.00" fill="#196b24"/><rect x="1124.03" y="773.7" width="16.85" height="20.30" fill="#e97132"/><line x1="505" y1="794.5" x2="1161" y2="794.5" stroke="#d9d9d9" stroke-width="1"/><line x1="505.5" y1="794" x2="505.5" y2="894" stroke="#d9d9d9" stroke-width="1.3"/><line x1="669.5" y1="794" x2="669.5" y2="865" stroke="#d9d9d9" stroke-width="1.3"/><line x1="832.5" y1="794" x2="832.5" y2="865" stroke="#d9d9d9" stroke-width="1.3"/><line x1="996.5" y1="794" x2="996.5" y2="865" stroke="#d9d9d9" stroke-width="1.3"/><line x1="1160.5" y1="794" x2="1160.5" y2="894" stroke="#d9d9d9" stroke-width="1.3"/><rect x="447.5" y="130.5" width="1000" height="806.5" fill="none" stroke="#6e6e6e" stroke-width="1.6"/><circle cx="448" cy="131" r="6" fill="#fff" stroke="#6e6e6e" stroke-width="2.2"/><circle cx="948" cy="131" r="6" fill="#fff" stroke="#6e6e6e" stroke-width="2.2"/><circle cx="1448" cy="131" r="6" fill="#fff" stroke="#6e6e6e" stroke-width="2.2"/><circle cx="448" cy="534" r="6" fill="#fff" stroke="#6e6e6e" stroke-width="2.2"/><circle cx="1448" cy="534" r="6" fill="#fff" stroke="#6e6e6e" stroke-width="2.2"/><circle cx="448" cy="937" r="6" fill="#fff" stroke="#6e6e6e" stroke-width="2.2"/><circle cx="948" cy="937" r="6" fill="#fff" stroke="#6e6e6e" stroke-width="2.2"/><circle cx="1448" cy="937" r="6" fill="#fff" stroke="#6e6e6e" stroke-width="2.2"/></svg><div class="t" style="left:432px;width:60px;text-align:right;top:784.0px;font-size:14px;line-height:20px;color:#595959">0%</div><div class="t" style="left:432px;width:60px;text-align:right;top:722.6px;font-size:14px;line-height:20px;color:#595959">10%</div><div class="t" style="left:432px;width:60px;text-align:right;top:661.3px;font-size:14px;line-height:20px;color:#595959">20%</div><div class="t" style="left:432px;width:60px;text-align:right;top:600.0px;font-size:14px;line-height:20px;color:#595959">30%</div><div class="t" style="left:432px;width:60px;text-align:right;top:538.6px;font-size:14px;line-height:20px;color:#595959">40%</div><div class="t" style="left:432px;width:60px;text-align:right;top:477.2px;font-size:14px;line-height:20px;color:#595959">50%</div><div class="t" style="left:432px;width:60px;text-align:right;top:415.9px;font-size:14px;line-height:20px;color:#595959">60%</div><div class="t" style="left:432px;width:60px;text-align:right;top:354.6px;font-size:14px;line-height:20px;color:#595959">70%</div><div class="t" style="left:432px;width:60px;text-align:right;top:293.2px;font-size:14px;line-height:20px;color:#595959">80%</div><div class="t" style="left:432px;width:60px;text-align:right;top:231.9px;font-size:14px;line-height:20px;color:#595959">90%</div><div class="t" style="left:432px;width:60px;text-align:right;top:170.5px;font-size:14px;line-height:20px;color:#595959">100%</div><div class="fit" style="left:517.62px;top:806.0px;width:30px;font-size:15px;line-height:21px;color:#595959;"><span>総数</span></div><div class="fit" style="left:572.15px;top:806.0px;width:30px;font-size:15px;line-height:21px;color:#595959;"><span>女性</span></div><div class="fit" style="left:626.68px;top:806.0px;width:30px;font-size:15px;line-height:21px;color:#595959;"><span>男性</span></div><div class="fit" style="left:681.21px;top:806.0px;width:30px;font-size:15px;line-height:21px;color:#595959;"><span>総数</span></div><div class="fit" style="left:735.74px;top:806.0px;width:30px;font-size:15px;line-height:21px;color:#595959;"><span>女性</span></div><div class="fit" style="left:790.27px;top:806.0px;width:30px;font-size:15px;line-height:21px;color:#595959;"><span>男性</span></div><div class="fit" style="left:844.8000000000001px;top:806.0px;width:30px;font-size:15px;line-height:21px;color:#595959;"><span>総数</span></div><div class="fit" style="left:899.33px;top:806.0px;width:30px;font-size:15px;line-height:21px;color:#595959;"><span>女性</span></div><div class="fit" style="left:953.86px;top:806.0px;width:30px;font-size:15px;line-height:21px;color:#595959;"><span>男性</span></div><div class="fit" style="left:1008.39px;top:806.0px;width:30px;font-size:15px;line-height:21px;color:#595959;"><span>総数</span></div><div class="fit" style="left:1062.92px;top:806.0px;width:30px;font-size:15px;line-height:21px;color:#595959;"><span>女性</span></div><div class="fit" style="left:1117.4500000000003px;top:806.0px;width:30px;font-size:15px;line-height:21px;color:#595959;"><span>男性</span></div><div class="fit" style="left:562.15px;top:841.5px;width:50px;font-size:15px;line-height:21px;color:#595959;"><span>6歳-8歳</span></div><div class="fit" style="left:721.74px;top:841.5px;width:58px;font-size:15px;line-height:21px;color:#595959;"><span>9歳-11歳</span></div><div class="fit" style="left:881.33px;top:841.5px;width:66px;font-size:15px;line-height:21px;color:#595959;"><span>12歳-14歳</span></div><div class="fit" style="left:1062.92px;top:841.5px;width:30px;font-size:15px;line-height:21px;color:#595959;"><span>総数</span></div><div class="t" style="left:802.9px;width:60px;text-align:center;top:874px;font-size:14px;line-height:20px;color:#595959">2023</div><div class="a" style="left:460px;top:140px;width:104px;height:22px;background:linear-gradient(#ececec,#c8c8c8)"></div><div class="fit" style="left:464px;top:141.0px;width:92px;font-size:14px;line-height:20px;color:#222;"><span>合計 / 割合 (%)</span></div><div class="a" style="left:1180px;top:381px;width:254px;height:22px;background:linear-gradient(#ececec,#c8c8c8)"></div><div class="fit" style="left:1184px;top:382.0px;width:228px;font-size:14px;line-height:20px;color:#222;"><span>学校保健統計調査方式による肥満区分</span></div><svg class="a" style="left:1418px;top:389.0px" width="12" height="7"><path d="M1 1 H11 L6 6 Z" fill="#333"/></svg><div class="a" style="left:1186px;top:414.0px;width:9px;height:8px;background:#095f80"></div><div class="fit" style="left:1198px;top:408.0px;width:63px;font-size:14px;line-height:20px;color:#595959;"><span>+50%以上</span></div><div class="a" style="left:1186px;top:442.1px;width:9px;height:8px;background:#0f4015"></div><div class="fit" style="left:1198px;top:436.1px;width:143px;font-size:14px;line-height:20px;color:#595959;"><span>+40%以上～+50%未満</span></div><div class="a" style="left:1186px;top:470.2px;width:9px;height:8px;background:#99400f"></div><div class="fit" style="left:1198px;top:464.2px;width:143px;font-size:14px;line-height:20px;color:#595959;"><span>+30%以上～+40%未満</span></div><div class="a" style="left:1186px;top:498.3px;width:9px;height:8px;background:#0d3a4e"></div><div class="fit" style="left:1198px;top:492.3px;width:143px;font-size:14px;line-height:20px;color:#595959;"><span>+20%以上～+30%未満</span></div><div class="a" style="left:1186px;top:526.4px;width:9px;height:8px;background:#4ea72e"></div><div class="fit" style="left:1198px;top:520.4px;width:143px;font-size:14px;line-height:20px;color:#595959;"><span>+10%以上～+20%未満</span></div><div class="a" style="left:1186px;top:554.5px;width:9px;height:8px;background:#a02b93"></div><div class="fit" style="left:1198px;top:548.5px;width:129px;font-size:14px;line-height:20px;color:#595959;"><span>0%以上～+10%未満</span></div><div class="a" style="left:1186px;top:582.6px;width:9px;height:8px;background:#0f9ed5"></div><div class="fit" style="left:1198px;top:576.6px;width:111px;font-size:14px;line-height:20px;color:#595959;"><span>-10%超～0%未満</span></div><div class="a" style="left:1186px;top:610.7px;width:9px;height:8px;background:#196b24"></div><div class="fit" style="left:1198px;top:604.7px;width:125px;font-size:14px;line-height:20px;color:#595959;"><span>-20%超～-10%以下</span></div><div class="a" style="left:1186px;top:638.8px;width:9px;height:8px;background:#e97132"></div><div class="fit" style="left:1198px;top:632.8px;width:125px;font-size:14px;line-height:20px;color:#595959;"><span>-30%超～-20%以下</span></div><div class="a" style="left:1186px;top:666.9px;width:9px;height:8px;background:#156082"></div><div class="fit" style="left:1198px;top:660.9px;width:62px;font-size:14px;line-height:20px;color:#595959;"><span>-30%以下</span></div><div class="a" style="left:460px;top:903px;width:94px;height:22px;background:linear-gradient(#ececec,#c8c8c8)"></div><div class="fit" style="left:464px;top:904.0px;width:55px;font-size:14px;line-height:20px;color:#222;"><span>日付 (年)</span></div><svg class="a" style="left:528px;top:906px" width="22" height="17"><path d="M2 10 H7 L4.5 13 Z" fill="#333"/><path d="M8 2 H21 L16 8 V15 H13 V8 Z" fill="#6b6b6b"/></svg><div class="a" style="left:555px;top:903px;width:80px;height:22px;background:linear-gradient(#ececec,#c8c8c8)"></div><div class="fit" style="left:559px;top:904.0px;width:54px;font-size:14px;line-height:20px;color:#222;"><span>年齢階級</span></div><svg class="a" style="left:619px;top:911.0px" width="12" height="7"><path d="M1 1 H11 L6 6 Z" fill="#333"/></svg><div class="a" style="left:636px;top:903px;width:54px;height:22px;background:linear-gradient(#ececec,#c8c8c8)"></div><div class="fit" style="left:640px;top:904.0px;width:27px;font-size:14px;line-height:20px;color:#222;"><span>性別</span></div><svg class="a" style="left:674px;top:911.0px" width="12" height="7"><path d="M1 1 H11 L6 6 Z" fill="#333"/></svg><div class="a" style="left:1392px;top:904px;width:19px;height:21px;background:linear-gradient(#e8e8e8,#c9c9c9)"></div><div class="a" style="left:1412px;top:904px;width:19px;height:21px;background:linear-gradient(#e8e8e8,#c9c9c9)"></div><svg class="a" style="left:1392px;top:904px" width="40" height="21"><path d="M5 10.5 H14 M9.5 6 V15 M25 10.5 H34" stroke="#555" stroke-width="1.6"/></svg>
<div id="colhdr" class="a"></div>
<div class="ch" style="left:37px"><span style="position:relative;top:1px">A</span></div>
<div class="ch" style="left:125px"><span style="position:relative;top:1px">B</span></div>
<div class="ch" style="left:213px"><span style="position:relative;top:1px">C</span></div>
<div class="ch" style="left:301px"><span style="position:relative;top:1px">D</span></div>
<div class="ch" style="left:389px"><span style="position:relative;top:1px">E</span></div>
<div class="ch" style="left:477px"><span style="position:relative;top:1px">F</span></div>
<div class="ch" style="left:565px"><span style="position:relative;top:1px">G</span></div>
<div class="ch" style="left:653px"><span style="position:relative;top:1px">H</span></div>
<div class="ch" style="left:741px"><span style="position:relative;top:1px">I</span></div>
<div class="ch" style="left:829px"><span style="position:relative;top:1px">J</span></div>
<div class="ch" style="left:917px"><span style="position:relative;top:1px">K</span></div>
<div class="ch" style="left:1005px"><span style="position:relative;top:1px">L</span></div>
<div class="ch" style="left:1093px"><span style="position:relative;top:1px">M</span></div>
<div class="ch" style="left:1181px"><span style="position:relative;top:1px">N</span></div>
<div class="ch" style="left:1269px"><span style="position:relative;top:1px">O</span></div>
<div class="ch" style="left:1357px"><span style="position:relative;top:1px">P</span></div>
<svg class="a" style="left:0;top:98px" width="37" height="30"><polygon points="11,24 32,24 32,3" fill="#b4b4b4"/><line x1="36.5" y1="0" x2="36.5" y2="30" stroke="#9b9b9b"/></svg>
<div class="a" style="left:1456px;top:98px;width:26px;height:857px;background:#e6e9ef"></div><div class="a" style="left:1458.5px;top:98.5px;width:22px;height:856px;background:#f3f3f3;border-radius:10px"></div><svg class="a" style="left:1456px;top:98px" width="26" height="20"><path d="M8 14.5 L13.5 7 L19 14.5 Z" fill="#707070" stroke="#707070" stroke-width="1" stroke-linejoin="round"/></svg><div class="a" style="left:1464px;top:118px;width:11px;height:425px;border-radius:5.5px;background:#707070"></div><svg class="a" style="left:1456px;top:935px" width="26" height="20"><path d="M8 6 L13.5 13.5 L19 6 Z" fill="#707070" stroke="#707070" stroke-width="1" stroke-linejoin="round"/></svg>
<div id="bottom" class="a"></div>
<svg class="a" style="left:28px;top:962px" width="60" height="20" fill="none" stroke="#8a8a8a" stroke-width="1.4"><path d="M11 4 L5 10 L11 16 M45 4 L51 10 L45 16"/></svg><div class="fit" style="left:152px;top:960.5px;width:37px;font-size:18px;line-height:25px;color:#333;"><span>data</span></div><div class="a" style="left:207px;top:962px;width:1px;height:20px;background:#c8c8c8"></div><div class="a" style="left:213px;top:953px;width:66px;height:34px;background:#fff;border-radius:0 0 6px 6px"></div><div class="fit" style="left:225px;top:957.5px;width:42px;font-size:18px;line-height:25px;color:#222;"><span>pivot</span></div><div class="a" style="left:223px;top:982px;width:46px;height:3px;background:#107c41;border-radius:1px"></div><div class="a" style="left:284px;top:962px;width:1px;height:20px;background:#c8c8c8"></div><svg class="a" style="left:334px;top:962px" width="20" height="20"><path d="M10 3 V17 M3 10 H17" stroke="#333" stroke-width="1.6"/></svg><svg class="a" style="left:889px;top:962px" width="8" height="20"><rect x="3.6" y="5" width="2.8" height="2.6" fill="#2a2a2a"/><rect x="3.6" y="10.2" width="2.8" height="2.6" fill="#2a2a2a"/><rect x="3.6" y="15.4" width="2.8" height="2.6" fill="#2a2a2a"/></svg><div class="a" style="left:915px;top:962px;width:543px;height:21px;background:#f6f6f6;border-radius:10px"></div><svg class="a" style="left:915px;top:962px" width="543" height="21"><path d="M14 6 L6.5 10.5 L14 15 Z" fill="#707070" stroke="#707070" stroke-linejoin="round"/><path d="M529 6 L536.5 10.5 L529 15 Z" fill="#707070" stroke="#707070" stroke-linejoin="round"/></svg><div class="a" style="left:935px;top:967px;width:422px;height:11px;background:#707070;border-radius:5.5px"></div>
<div id="panel" class="a"></div>
<div class="fit" style="left:1497px;top:113.0px;width:184px;font-size:18px;line-height:25px;color:#222;font-weight:bold;"><span>ピボットグラフのフィールド</span></div><svg class="a" style="left:1841px;top:116px" width="20" height="20"><path d="M2.5 6 L10 13.5 L17.5 6" fill="none" stroke="#333" stroke-width="1.5"/></svg><svg class="a" style="left:1881px;top:115px" width="20" height="20"><path d="M4.3 3.5 L17.5 16.7 M17.5 3.5 L4.3 16.7" fill="none" stroke="#333" stroke-width="1.5"/></svg><div class="fit" style="left:1498px;top:150.0px;width:59px;font-size:15px;line-height:21px;color:#222;font-weight:bold;"><span>アクティブ</span></div><div class="fit" style="left:1588px;top:150.0px;width:36px;font-size:15px;line-height:21px;color:#333;"><span>すべて</span></div><div class="a" style="left:1498px;top:179px;width:62px;height:3px;background:#107c41;border-radius:1px"></div><div class="fit" style="left:1498px;top:196.0px;width:277px;font-size:14.5px;line-height:20px;color:#222;"><span>レポートに追加するフィールドを選択してください:</span></div><div class="a" style="left:1848px;top:187px;width:57px;height:35px;background:#fff;border:1px solid #8a8a8a"></div><svg class="a" style="left:1858px;top:192px" width="24" height="24" fill="none" stroke="#333" stroke-width="1.3"><circle cx="12" cy="12" r="3.2"/><path d="M10.3 2.5 H13.7 L14.3 5.3 L16.8 6.7 L19.5 5.8 L21.2 8.7 L19.1 10.6 V13.4 L21.2 15.3 L19.5 18.2 L16.8 17.3 L14.3 18.7 L13.7 21.5 H10.3 L9.7 18.7 L7.2 17.3 L4.5 18.2 L2.8 15.3 L4.9 13.4 V10.6 L2.8 8.7 L4.5 5.8 L7.2 6.7 L9.7 5.3 Z"/></svg><svg class="a" style="left:1887px;top:199px" width="12" height="10"><path d="M2.5 3 L6 6.5 L9.5 3" fill="none" stroke="#333" stroke-width="1.3"/></svg><div class="a" style="left:1498px;top:239px;width:407px;height:30px;background:#fff;border:1px solid #8a8a8a"></div><div class="fit" style="left:1506px;top:243.5px;width:29px;font-size:14.5px;line-height:20px;color:#7a7a7a;"><span>検索</span></div><svg class="a" style="left:1877px;top:242px" width="26" height="26" fill="none" stroke="#333" stroke-width="1.5"><circle cx="15" cy="10" r="7"/><path d="M10 15 L3 22"/></svg><div class="a" style="left:1498px;top:291px;width:407px;height:251px;background:#fff;border:1px solid #8a8a8a;overflow:hidden"><div class="a" style="position:absolute;left:47px;top:-8.5px;width:16px;height:16px;border:1px solid #555;border-radius:2px;background:#fff"></div><div class="fit" style="left:71px;top:-6.0px;width:29px;font-size:15px;line-height:21px;color:#222;"><span>日付</span></div><svg class="a" style="position:absolute;left:47px;top:23.5px" width="16" height="16"><rect x="0" y="0" width="16" height="16" rx="2" fill="#107c41"/><path d="M3.5 8 L6.5 11 L12.5 5" fill="none" stroke="#fff" stroke-width="1.6"/></svg><div class="fit" style="left:71px;top:24.0px;width:29px;font-size:15px;line-height:21px;color:#222;font-weight:bold;"><span>性別</span></div><svg class="a" style="position:absolute;left:47px;top:54.5px" width="16" height="16"><rect x="0" y="0" width="16" height="16" rx="2" fill="#107c41"/><path d="M3.5 8 L6.5 11 L12.5 5" fill="none" stroke="#fff" stroke-width="1.6"/></svg><div class="fit" style="left:71px;top:55.0px;width:59px;font-size:15px;line-height:21px;color:#222;font-weight:bold;"><span>年齢階級</span></div><svg class="a" style="position:absolute;left:47px;top:86px" width="16" height="16"><rect x="0" y="0" width="16" height="16" rx="2" fill="#107c41"/><path d="M3.5 8 L6.5 11 L12.5 5" fill="none" stroke="#fff" stroke-width="1.6"/></svg><div class="fit" style="left:71px;top:86.5px;width:246px;font-size:15px;line-height:21px;color:#222;font-weight:bold;"><span>学校保健統計調査方式による肥満区分</span></div><svg class="a" style="position:absolute;left:47px;top:117px" width="16" height="16"><rect x="0" y="0" width="16" height="16" rx="2" fill="#107c41"/><path d="M3.5 8 L6.5 11 L12.5 5" fill="none" stroke="#fff" stroke-width="1.6"/></svg><div class="fit" style="left:71px;top:117.5px;width:64px;font-size:15px;line-height:21px;color:#222;font-weight:bold;"><span>割合 (%)</span></div><svg class="a" style="position:absolute;left:47px;top:148px" width="16" height="16"><rect x="0" y="0" width="16" height="16" rx="2" fill="#107c41"/><path d="M3.5 8 L6.5 11 L12.5 5" fill="none" stroke="#fff" stroke-width="1.6"/></svg><div class="fit" style="left:71px;top:148.5px;width:62px;font-size:15px;line-height:21px;color:#222;font-weight:bold;"><span>日付 (年)</span></div><div class="a" style="position:absolute;left:47px;top:180px;width:16px;height:16px;border:1px solid #555;border-radius:2px;background:#fff"></div><div class="fit" style="left:71px;top:179.5px;width:93px;font-size:15px;line-height:21px;color:#222;"><span>日付 (四半期)</span></div><div class="a" style="position:absolute;left:47px;top:210.5px;width:16px;height:16px;border:1px solid #555;border-radius:2px;background:#fff"></div><div class="fit" style="left:71px;top:210.0px;width:62px;font-size:15px;line-height:21px;color:#222;"><span>日付 (月)</span></div></div><svg class="a" style="left:1861px;top:442px" width="18" height="18" fill="none" stroke="#444" stroke-width="1.3"><path d="M1.5 1.5 H16.5 L11 8.5 V16.5 L7 14 V8.5 Z"/></svg><div class="a" style="left:1883px;top:292px;width:21px;height:249px;background:#f4f4f4"></div><svg class="a" style="left:1885px;top:296px" width="18" height="12"><path d="M3.5 10 L9 3 L14.5 10 Z" fill="#707070" stroke="#707070" stroke-linejoin="round"/></svg><div class="a" style="left:1888px;top:336px;width:11px;height:185px;background:#707070"></div><svg class="a" style="left:1885px;top:525px" width="18" height="12"><path d="M3.5 2 L9 9 L14.5 2 Z" fill="#707070" stroke="#707070" stroke-linejoin="round"/></svg><div class="a" style="left:1500px;top:562px;width:405px;height:1px;border-top:1px dotted #b8b8b8"></div><div class="fit" style="left:1503px;top:568.0px;width:272px;font-size:14.5px;line-height:20px;color:#222;"><span>次のボックス間でフィールドをドラッグしてください:</span></div><svg class="a" style="left:1506px;top:611px" width="16" height="16"><path d="M1 2 H14 L9.5 7.5 V14 L5.5 12 V7.5 Z" fill="#666"/></svg><div class="fit" style="left:1529px;top:609.0px;width:53px;font-size:14.5px;line-height:20px;color:#222;"><span>フィルター</span></div><svg class="a" style="left:1712px;top:611px" width="16" height="16"><path d="M2 2 V14 M5 2 V14 M8 2 V14 M11 2 V14" stroke="#888" stroke-width="1.2"/></svg><div class="fit" style="left:1733px;top:608.5px;width:80px;font-size:15px;line-height:21px;color:#222;"><span>凡例 (系列)</span></div><svg class="a" style="left:1506px;top:777px" width="16" height="16"><path d="M1 3.5 H14 M1 7 H14 M1 10.5 H14" stroke="#888" stroke-width="1.2"/></svg><div class="fit" style="left:1530px;top:774.5px;width:94px;font-size:15px;line-height:21px;color:#222;"><span>軸 (分類項目)</span></div><div class="fit" style="left:1712px;top:775.0px;width:10px;font-size:14px;line-height:20px;color:#666;"><span>Σ</span></div><div class="fit" style="left:1734px;top:774.5px;width:16px;font-size:15px;line-height:21px;color:#222;"><span>値</span></div><div class="a" style="left:1502px;top:634px;width:194px;height:125px;background:#fff"></div><div class="a" style="left:1706px;top:634px;width:200px;height:125px;background:#fff"></div><div class="a" style="left:1502px;top:800px;width:194px;height:125px;background:#fff"></div><div class="a" style="left:1706px;top:800px;width:200px;height:125px;background:#fff"></div><div class="a" style="left:1703px;top:608px;width:1px;height:317px;background:#c0c0c0"></div><div class="a" style="left:1502px;top:766px;width:404px;height:1px;background:#c0c0c0"></div><div class="a" style="left:1707px;top:636px;width:198px;height:26px;background:#fff;border:1px solid #a6a6a6"></div><div class="fit" style="left:1717px;top:638.5px;width:160px;font-size:15px;line-height:21px;color:#222;"><span>学校保健統計調査方式...</span></div><svg class="a" style="left:1888px;top:645px" width="10" height="8"><path d="M1.5 2 L5 5.5 L8.5 2" fill="none" stroke="#333" stroke-width="1.3"/></svg><div class="a" style="left:1503px;top:802px;width:192px;height:26px;background:#fff;border:1px solid #a6a6a6"></div><div class="fit" style="left:1513px;top:804.5px;width:62px;font-size:15px;line-height:21px;color:#222;"><span>日付 (年)</span></div><svg class="a" style="left:1678px;top:811px" width="10" height="8"><path d="M1.5 2 L5 5.5 L8.5 2" fill="none" stroke="#333" stroke-width="1.3"/></svg><div class="a" style="left:1503px;top:831px;width:192px;height:26px;background:#fff;border:1px solid #a6a6a6"></div><div class="fit" style="left:1513px;top:833.5px;width:59px;font-size:15px;line-height:21px;color:#222;"><span>年齢階級</span></div><svg class="a" style="left:1678px;top:840px" width="10" height="8"><path d="M1.5 2 L5 5.5 L8.5 2" fill="none" stroke="#333" stroke-width="1.3"/></svg><div class="a" style="left:1503px;top:861px;width:192px;height:26px;background:#fff;border:1px solid #a6a6a6"></div><div class="fit" style="left:1513px;top:863.5px;width:29px;font-size:15px;line-height:21px;color:#222;"><span>性別</span></div><svg class="a" style="left:1678px;top:870px" width="10" height="8"><path d="M1.5 2 L5 5.5 L8.5 2" fill="none" stroke="#333" stroke-width="1.3"/></svg><div class="a" style="left:1707px;top:802px;width:198px;height:26px;background:#fff;border:1px solid #a6a6a6"></div><div class="fit" style="left:1717px;top:804.5px;width:111px;font-size:15px;line-height:21px;color:#222;"><span>合計 / 割合 (%)</span></div><svg class="a" style="left:1888px;top:811px" width="10" height="8"><path d="M1.5 2 L5 5.5 L8.5 2" fill="none" stroke="#333" stroke-width="1.3"/></svg><div class="a" style="left:1506px;top:958px;width:16px;height:16px;border:1px solid #555;border-radius:2px;background:#fff"></div><div class="fit" style="left:1529px;top:956.5px;width:163px;font-size:14.5px;line-height:20px;color:#222;"><span>レイアウトの更新を保留する</span></div><div class="a" style="left:1862px;top:950px;width:44px;height:32px;border:1px solid #d0d0d0;background:#f0f0f0"></div><div class="fit" style="left:1870px;top:956.0px;width:28px;font-size:14px;line-height:20px;color:#a8a8a8;"><span>更新</span></div>
<script>
(function(){var els=document.querySelectorAll('.fit');for(var i=0;i<els.length;i++){var e=els[i],s=e.firstChild,w=parseFloat(e.style.width),n=s.getBoundingClientRect().width;if(n>0&&w>0){s.style.transform='scaleX('+(w/n)+')';}}})();
</script>
</body></html>
